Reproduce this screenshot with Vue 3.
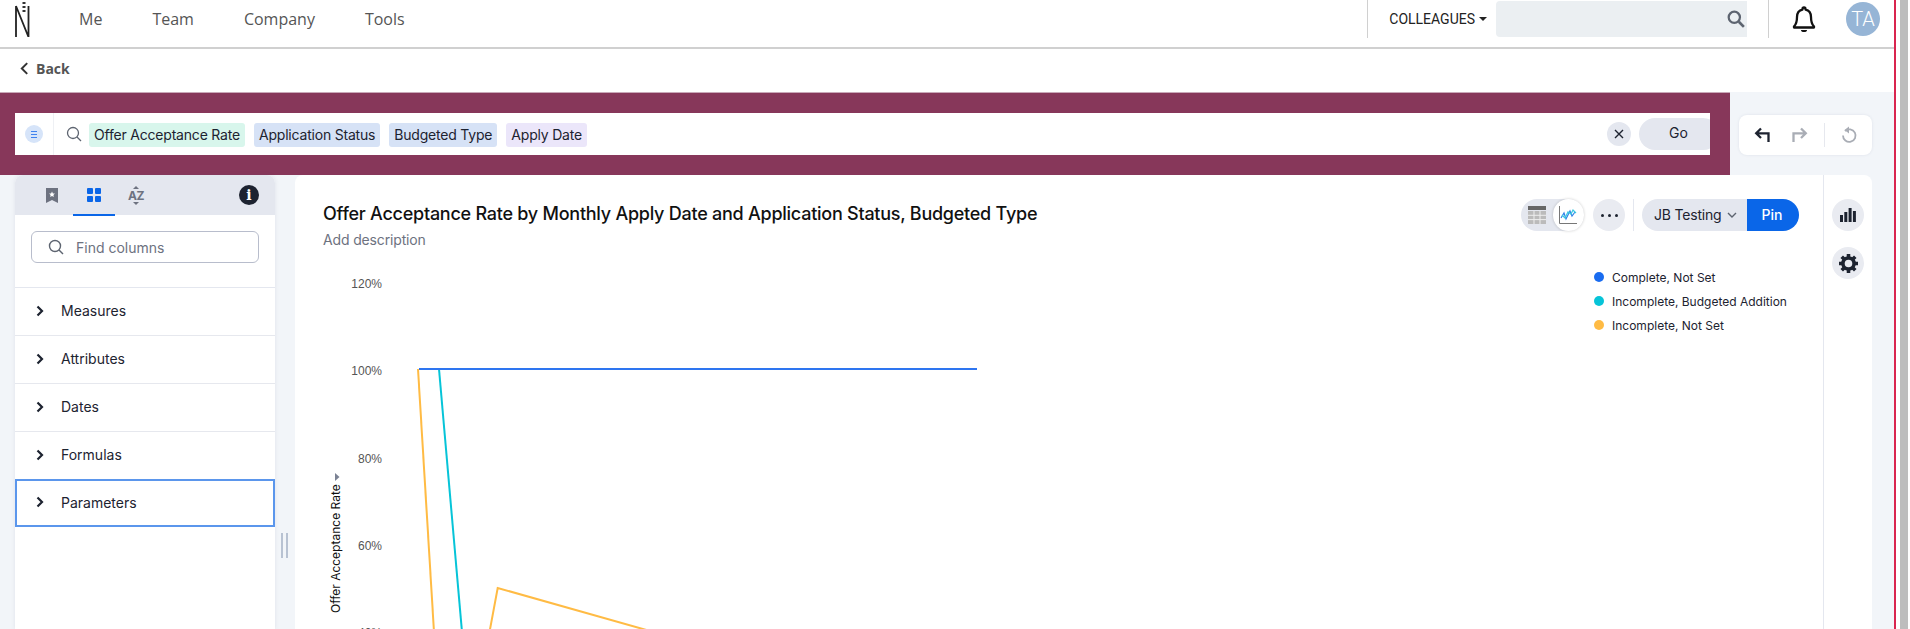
<template>
  <div class="page">
    <div class="app">
      <header class="topbar">
        <svg class="logo" width="18" height="36" viewBox="0 0 18 36">
          <path d="M3 5v31M15.500 5v31M3 5l12.500 31" fill="none" stroke="#222" stroke-width="1.800" />
          <path d="M9.500 2h3M9.500 6h3M9.500 10h3" fill="none" stroke="#333" stroke-width="2" />
        </svg>
        <nav class="nav">
          <a v-for="item in navItems" :key="item">{{ item }}</a>
        </nav>
        <div class="top-right">
          <div class="colleagues">COLLEAGUES<span class="caret"></span></div>
          <div class="top-search">
            <svg width="18" height="18" viewBox="0 0 16 16">
              <circle cx="6.500" cy="6.500" r="5" fill="none" stroke="#5d6470" stroke-width="2" />
              <path d="M10.500 10.500l4.500 4.500" stroke="#5d6470" stroke-width="2.400" />
            </svg>
          </div>
          <div class="bell-wrap">
            <svg width="24" height="28" viewBox="0 0 24 28">
              <path d="M12 2.500c-.9 0-1.500.6-1.500 1.400v.7C6.700 5.400 5 8.500 5 12c0 5-1 7.500-3 9.500v1h20v-1c-2-2-3-4.500-3-9.500 0-3.500-1.700-6.600-5.500-7.400v-.7c0-.8-.6-1.400-1.500-1.400z" fill="none" stroke="#111" stroke-width="2.300" stroke-linejoin="round" />
              <path d="M9 25h6a3 2 0 0 1-6 0z" fill="#111" />
            </svg>
          </div>
          <div class="avatar">TA</div>
        </div>
      </header>

      <div class="back-row">
        <svg width="9" height="13" viewBox="0 0 8 12">
          <path d="M6.500 1L1.500 6l5 5" fill="none" stroke="#333" stroke-width="1.800" />
        </svg>
        <span>Back</span>
      </div>

      <div class="workspace">
        <div class="search-row">
          <div class="band">
            <div class="search-bar">
              <div class="source-btn">
                <span class="source-dot">
                  <svg width="8" height="9" viewBox="0 0 8 9">
                    <path d="M1 1.500h6M1 4.500h6M1 7.500h6" stroke="#3f82ef" stroke-width="1.100" />
                  </svg>
                </span>
              </div>
              <svg class="bar-glass" width="16" height="16" viewBox="0 0 16 16">
                <circle cx="7" cy="7" r="5.500" fill="none" stroke="#5d6470" stroke-width="1.300" />
                <path d="M11 11l4 4" stroke="#5d6470" stroke-width="1.300" />
              </svg>
              <span
                v-for="chip in chips"
                :key="chip.label"
                class="chip"
                :class="chip.kind"
              >{{ chip.label }}</span>
              <span class="clear">
                <svg width="10" height="10" viewBox="0 0 10 10">
                  <path d="M1 1l8 8M9 1l-8 8" stroke="#1d2330" stroke-width="1.400" />
                </svg>
              </span>
              <span class="go">Go</span>
            </div>
          </div>
          <div class="undo-card">
            <svg width="18" height="18" viewBox="0 0 18 18">
              <path d="M7 2.500L2.200 7.300 7 12M2.200 7.300h12.300V16" fill="none" stroke="#1d2330" stroke-width="2.300" />
            </svg>
            <svg width="18" height="18" viewBox="0 0 18 18">
              <path d="M11 2.500l4.800 4.800L11 12M15.800 7.300H3.500V16" fill="none" stroke="#a9adb5" stroke-width="2.300" />
            </svg>
            <span class="undo-sep"></span>
            <svg width="18" height="18" viewBox="0 0 18 18">
              <path d="M5 5a6.300 6.300 0 1 1-2 4.500" fill="none" stroke="#a9adb5" stroke-width="1.800" />
              <path d="M9 .5v7l-4.500-3.500z" fill="#a9adb5" />
            </svg>
          </div>
        </div>

        <div class="body-row">
          <aside class="columns-panel">
            <div class="panel-tabs">
              <span class="tab">
                <svg width="12" height="15" viewBox="0 0 12 15">
                  <path d="M0 0h12v15l-6-3-6 3z" fill="#6d7280" />
                  <path d="M6 3.500l.9 1.900 2 .2-1.500 1.400.4 2L6 8l-1.800 1 .4-2-1.500-1.400 2-.2z" fill="#fff" />
                </svg>
              </span>
              <span class="tab active">
                <svg width="14" height="14" viewBox="0 0 14 14">
                  <rect x="0" y="0" width="6" height="6" rx="1" fill="#0a66e8" />
                  <rect x="8" y="0" width="6" height="6" rx="1" fill="#0a66e8" />
                  <rect x="0" y="8" width="6" height="6" rx="1" fill="#0a66e8" />
                  <rect x="8" y="8" width="6" height="6" rx="1" fill="#0a66e8" />
                </svg>
              </span>
              <span class="tab az">
                <svg width="6" height="3" viewBox="0 0 6 3"><path d="M0 3l3-3 3 3z" fill="#6d7280" /></svg>
                <span class="az-text">AZ</span>
                <svg width="6" height="3" viewBox="0 0 6 3"><path d="M0 0l3 3 3-3z" fill="#6d7280" /></svg>
              </span>
              <span class="info">i</span>
            </div>
            <div class="find-wrap">
              <div class="find-box">
                <svg width="16" height="16" viewBox="0 0 16 16">
                  <circle cx="7" cy="7" r="5.500" fill="none" stroke="#5d6470" stroke-width="1.400" />
                  <path d="M11 11l4 4" stroke="#5d6470" stroke-width="1.400" />
                </svg>
                <span>Find columns</span>
              </div>
            </div>
            <div
              v-for="group in groups"
              :key="group"
              class="group-row"
              :class="{ selected: group === 'Parameters' }"
            >
              <svg width="8" height="12" viewBox="0 0 8 12">
                <path d="M1.500 1.500L6 6l-4.500 4.500" fill="none" stroke="#1d2330" stroke-width="2.200" />
              </svg>
              <span>{{ group }}</span>
            </div>
          </aside>

          <div class="resizer"><i></i><i></i></div>

          <main class="chart-card">
            <div class="chart-main">
              <div class="chart-head">
                <div>
                  <h1>Offer Acceptance Rate by Monthly Apply Date and Application Status, Budgeted Type</h1>
                  <p>Add description</p>
                </div>
                <div class="chart-actions">
                  <div class="view-toggle">
                    <span class="toggle-table">
                      <svg width="18" height="18" viewBox="0 0 18 18">
                        <rect x="0" y="0" width="18" height="4" fill="#666" />
                        <rect x="0" y="5" width="18" height="13" fill="#bbb" />
                        <path d="M6 5v13M12 5v13M0 9.300h18M0 13.600h18" stroke="#eee" stroke-width="1" />
                      </svg>
                    </span>
                    <span class="toggle-chart">
                      <svg width="18" height="18" viewBox="0 0 18 18">
                        <path d="M.5 0v17.500H18" fill="none" stroke="#777" stroke-width="1" />
                        <path d="M2 12l3-5 2 6 4-8 2 5 3-4" fill="none" stroke="#2f7fe8" stroke-width="1.200" />
                        <path d="M3 9l3 3 3-6 3 2 2-4 3 3" fill="none" stroke="#3cc8e0" stroke-width="1.200" />
                      </svg>
                    </span>
                  </div>
                  <span class="round-btn dots"><i></i><i></i><i></i></span>
                  <span class="action-sep"></span>
                  <div class="pin-group">
                    <span class="pin-select">
                      JB Testing
                      <svg width="10" height="6" viewBox="0 0 10 6">
                        <path d="M1 1l4 4 4-4" fill="none" stroke="#5d6470" stroke-width="1.400" />
                      </svg>
                    </span>
                    <span class="pin-btn">Pin</span>
                  </div>
                </div>
              </div>

              <div class="plot">
                <svg class="plot-svg" width="1528" height="370" viewBox="295 259 1528 370">
                  <g class="tick">
                    <text v-for="tick in ticks" :key="tick.label" x="382" :y="tick.y" text-anchor="end">{{ tick.label }}</text>
                  </g>
                  <text class="axis-title" transform="translate(340 613) rotate(-90)">Offer Acceptance Rate</text>
                  <path d="M335 473l4.500 4-4.500 4z" fill="#7b8294" />
                  <polyline v-for="line in lines" :key="line.color + line.points" :points="line.points" :stroke="line.color" fill="none" stroke-width="2" />
                </svg>
                <ul class="legend">
                  <li v-for="entry in legend" :key="entry.label">
                    <span class="dot" :style="{ background: entry.color }"></span>{{ entry.label }}
                  </li>
                </ul>
              </div>
            </div>
            <div class="rail">
              <span class="round-btn">
                <svg width="16" height="14" viewBox="0 0 16 14">
                  <rect x="0" y="7" width="3" height="7" fill="#1d2330" />
                  <rect x="4.300" y="4" width="3" height="10" fill="#1d2330" />
                  <rect x="8.600" y="0" width="3" height="14" fill="#1d2330" />
                  <rect x="12.900" y="3" width="3" height="11" fill="#1d2330" />
                </svg>
              </span>
              <span class="round-btn">
                <svg width="19" height="19" viewBox="1 1 16 16">
                  <circle cx="9" cy="9" r="4.700" fill="none" stroke="#1d2330" stroke-width="3" />
                  <path d="M9 1v3M9 14v3M1 9h3M14 9h3M3.300 3.300l2.200 2.200M12.500 12.500l2.200 2.200M14.700 3.300l-2.200 2.200M5.500 12.500l-2.200 2.200" stroke="#1d2330" stroke-width="3" />
                </svg>
              </span>
            </div>
          </main>
        </div>
      </div>
    </div>
    <div class="edge"><i></i></div>
  </div>
</template>

<script setup>
const navItems = ['Me', 'Team', 'Company', 'Tools']
const groups = ['Measures', 'Attributes', 'Dates', 'Formulas', 'Parameters']

const chips = [
  { label: 'Offer Acceptance Rate', kind: 'measure' },
  { label: 'Application Status', kind: 'attr' },
  { label: 'Budgeted Type', kind: 'attr' },
  { label: 'Apply Date', kind: 'date' }
]

const ticks = [
  { label: '120%', y: 288 },
  { label: '100%', y: 375 },
  { label: '80%', y: 463 },
  { label: '60%', y: 550 },
  { label: '40%', y: 637 }
]

const lines = [
  { color: '#ffbb44', points: '418,369 434,632' },
  { color: '#ffbb44', points: '489.500,632 497.700,588 650,631' },
  { color: '#06c4d8', points: '439,369 462,632' },
  { color: '#2e75f0', points: '419,369 977,369' }
]

const legend = [
  { label: 'Complete, Not Set', color: '#1a6cf0' },
  { label: 'Incomplete, Budgeted Addition', color: '#06c4d8' },
  { label: 'Incomplete, Not Set', color: '#ffbb44' }
]
</script>

<style>
html,
body {
  margin: 0;
  overflow: hidden;
  background: #fff;
}
</style>

<style scoped>
.page {
  display: flex;
  width: 1910px;
  height: 629px;
  overflow: hidden;
  font-family: Inter, "Liberation Sans", sans-serif;
  color: #1d2330;
}

.app {
  width: 1894px;
  flex: none;
}

.edge {
  flex: 1;
  border-left: 2px solid #d9254f;
  padding-left: 4px;
}

.edge i {
  display: block;
  width: 8px;
  height: 100%;
  background: #bdbdbd;
}

.topbar {
  display: flex;
  align-items: center;
  height: 38px;
  padding: 0 0 9px 13px;
  border-bottom: 2px solid #d0d0d0;
}

.logo {
  flex: none;
}

.nav {
  display: flex;
  margin-left: 48px;
  gap: 50px;
  font: 16px "Open Sans", sans-serif;
  color: #555;
}

.top-right {
  display: flex;
  align-items: center;
  margin-left: auto;
  height: 38px;
  border-left: 1px solid #d0d0d0;
}

.colleagues {
  display: flex;
  align-items: center;
  margin-left: 21px;
  font: 14px Roboto, sans-serif;
  color: #222;
}

.caret {
  margin-left: 4px;
  border-top: 4px solid #222;
  border-left: 4px solid transparent;
  border-right: 4px solid transparent;
}

.top-search {
  display: flex;
  align-items: center;
  justify-content: flex-end;
  width: 251px;
  height: 36px;
  margin-left: 9px;
  padding-right: 2px;
  box-sizing: border-box;
  background: #ebeff2;
  border-radius: 4px 0 0 4px;
}

.bell-wrap {
  display: flex;
  justify-content: center;
  align-items: center;
  width: 71px;
  height: 38px;
  margin-left: 21px;
  border-left: 1px solid #d0d0d0;
  box-sizing: border-box;
}

.avatar {
  width: 34px;
  height: 34px;
  margin-left: 7px;
  margin-right: 14px;
  border-radius: 50%;
  background: #96b5d6;
  color: #fff;
  font: 300 20px/34px Roboto, sans-serif;
  text-align: center;
}

.back-row {
  display: flex;
  align-items: center;
  gap: 7px;
  height: 38px;
  padding: 0 0 5px 20px;
  font: 700 14px "Open Sans", sans-serif;
  color: #555;
}

.workspace {
  background: #f2f5f9;
  height: 537px;
}

.search-row {
  display: flex;
  height: 83px;
}

.band {
  width: 1730px;
  padding: 20px 20px 0 15px;
  box-sizing: border-box;
  background: #87375a;
  border-top: 1px solid #c9a9b8;
}

.search-bar {
  display: flex;
  align-items: center;
  height: 42px;
  background: #fff;
  overflow: hidden;
}

.source-btn {
  display: flex;
  align-items: center;
  justify-content: center;
  width: 39px;
  height: 100%;
  border-right: 1px solid #eef0f4;
  box-sizing: border-box;
}

.source-dot {
  display: flex;
  align-items: center;
  justify-content: center;
  width: 18px;
  height: 18px;
  border-radius: 50%;
  background: #d6e4f9;
}

.bar-glass {
  margin-left: 12px;
  margin-right: 7px;
}

.chip {
  height: 24px;
  padding: 0 5px;
  margin: 2px 9px 0 0;
  border-radius: 3px;
  font-size: 14px;
  line-height: 24px;
  letter-spacing: -0.2px;
}

.measure {
  background: #d8f6ec;
}

.attr {
  background: #d6e2f6;
}

.date {
  background: #ebe6fa;
}

.clear {
  display: flex;
  align-items: center;
  justify-content: center;
  width: 24px;
  height: 24px;
  margin-left: auto;
  border-radius: 50%;
  background: #e4e7ef;
}

.go {
  width: 80px;
  height: 32px;
  margin-left: 8px;
  margin-right: -9px;
  padding-left: 30px;
  box-sizing: border-box;
  border-radius: 16px;
  background: #e4e7ef;
  font-size: 14px;
  line-height: 30px;
}

.undo-card {
  display: flex;
  align-items: center;
  gap: 18px;
  width: 133px;
  height: 40px;
  margin: 23px 0 0 9px;
  padding-left: 15px;
  box-sizing: border-box;
  background: #fff;
  border-radius: 8px;
  box-shadow: 0 0 3px rgba(80, 90, 120, 0.12);
}

.undo-sep {
  width: 1px;
  height: 24px;
  margin: 0 -3px 0 -2px;
  background: #e6e8ee;
}

.body-row {
  display: flex;
  padding-left: 15px;
}

.columns-panel {
  width: 260px;
  height: 454px;
  background: #fff;
  border-radius: 8px 8px 0 0;
  box-shadow: 0 0 4px rgba(80, 90, 120, 0.12);
}

.panel-tabs {
  position: relative;
  display: flex;
  align-items: center;
  height: 40px;
  padding-left: 16px;
  background: #e4e7ef;
  border-radius: 8px 8px 0 0;
}

.tab {
  display: flex;
  align-items: center;
  justify-content: center;
  width: 42px;
  height: 40px;
  box-sizing: border-box;
}

.tab.active {
  border-bottom: 2px solid #0a66e8;
  height: 41px;
  margin-top: 1px;
}

.az {
  flex-direction: column;
  gap: 1px;
  font-size: 12px;
  font-weight: 700;
  color: #6d7280;
}

.az-text {
  line-height: 11px;
  letter-spacing: -0.5px;
}

.info {
  margin-left: auto;
  margin-right: 16px;
  width: 20px;
  height: 20px;
  border-radius: 50%;
  background: #1d2330;
  color: #fff;
  font: 700 14px/20px "DejaVu Serif", serif;
  text-align: center;
}

.find-wrap {
  height: 73px;
  padding: 16px;
  box-sizing: border-box;
  border-bottom: 1px solid #e4e7ef;
}

.find-box {
  display: flex;
  align-items: center;
  gap: 12px;
  height: 32px;
  padding-left: 16px;
  box-sizing: border-box;
  border: 1px solid #b8bdcc;
  border-radius: 6px;
  font-size: 14px;
  color: #6d7280;
}

.group-row {
  display: flex;
  align-items: center;
  gap: 17px;
  height: 48px;
  padding: 0 0 2px 21px;
  box-sizing: border-box;
  border-bottom: 1px solid #e6e8ee;
  font-size: 14px;
}

.group-row.selected {
  margin-top: -1px;
  border: 2px solid #5b96ec;
  padding: 0 0 2px 19px;
}

.resizer {
  display: flex;
  gap: 3px;
  width: 20px;
  height: 25px;
  padding-left: 6px;
  margin-top: 358px;
  box-sizing: border-box;
}

.resizer i {
  width: 2px;
  height: 25px;
  background: #b8c2d2;
}

.chart-card {
  display: flex;
  width: 1577px;
  height: 454px;
  background: #fff;
  border-radius: 8px 8px 0 0;
}

.chart-main {
  width: 1528px;
  border-right: 1px solid #e4e7ef;
}

.chart-head {
  display: flex;
  justify-content: space-between;
  height: 84px;
  padding: 24px 24px 0 28px;
  box-sizing: border-box;
}

h1 {
  margin: 3px 0 0;
  font-size: 18px;
  font-weight: 500;
  line-height: 24px;
  letter-spacing: -0.25px;
  color: #111;
}

p {
  margin: 5px 0 0;
  font-size: 14px;
  letter-spacing: -0.15px;
  color: #6d7280;
}

.chart-actions {
  display: flex;
  align-items: center;
  height: 32px;
}

.view-toggle {
  display: flex;
  width: 63px;
  height: 32px;
  border-radius: 16px;
  background: #e4e7ef;
}

.toggle-table,
.toggle-chart {
  display: flex;
  align-items: center;
  justify-content: center;
  width: 32px;
  height: 32px;
}

.toggle-chart {
  border-radius: 50%;
  background: #fff;
  box-shadow: 0 0 3px rgba(0, 0, 0, 0.2);
}

.round-btn {
  display: flex;
  align-items: center;
  justify-content: center;
  width: 32px;
  height: 32px;
  border-radius: 50%;
  background: #e9ebf1;
}

.dots {
  gap: 4px;
  margin-left: 9px;
}

.dots i {
  width: 3px;
  height: 3px;
  border-radius: 50%;
  background: #1d2330;
}

.action-sep {
  width: 1px;
  height: 32px;
  margin: 0 8px;
  background: #e4e7ef;
}

.pin-group {
  display: flex;
  height: 32px;
  border-radius: 16px;
  overflow: hidden;
  font-size: 14px;
  line-height: 32px;
}

.pin-select {
  display: flex;
  align-items: center;
  gap: 6px;
  width: 105px;
  padding-left: 12px;
  box-sizing: border-box;
  background: #e4e7ef;
  letter-spacing: -0.2px;
}

.pin-btn {
  width: 52px;
  padding-right: 2px;
  box-sizing: border-box;
  background: #0a66e8;
  color: #fff;
  font-weight: 500;
  text-align: center;
}

.plot {
  position: relative;
  height: 370px;
}

.plot-svg {
  display: block;
}

.tick text {
  font: 12px "Liberation Sans", sans-serif;
  fill: #555;
}

.axis-title {
  font: 12px Inter, sans-serif;
  fill: #111;
}

.legend {
  position: absolute;
  top: 6px;
  right: 25px;
  width: 204px;
  margin: 0;
  padding: 0;
  list-style: none;
  font-size: 12px;
  white-space: nowrap;
}

.legend li {
  display: flex;
  align-items: center;
  height: 24px;
}

.dot {
  width: 10px;
  height: 10px;
  margin-right: 8px;
  border-radius: 50%;
}

.rail {
  display: flex;
  flex-direction: column;
  align-items: center;
  gap: 16px;
  width: 48px;
  padding-top: 24px;
  box-sizing: border-box;
}
</style>
